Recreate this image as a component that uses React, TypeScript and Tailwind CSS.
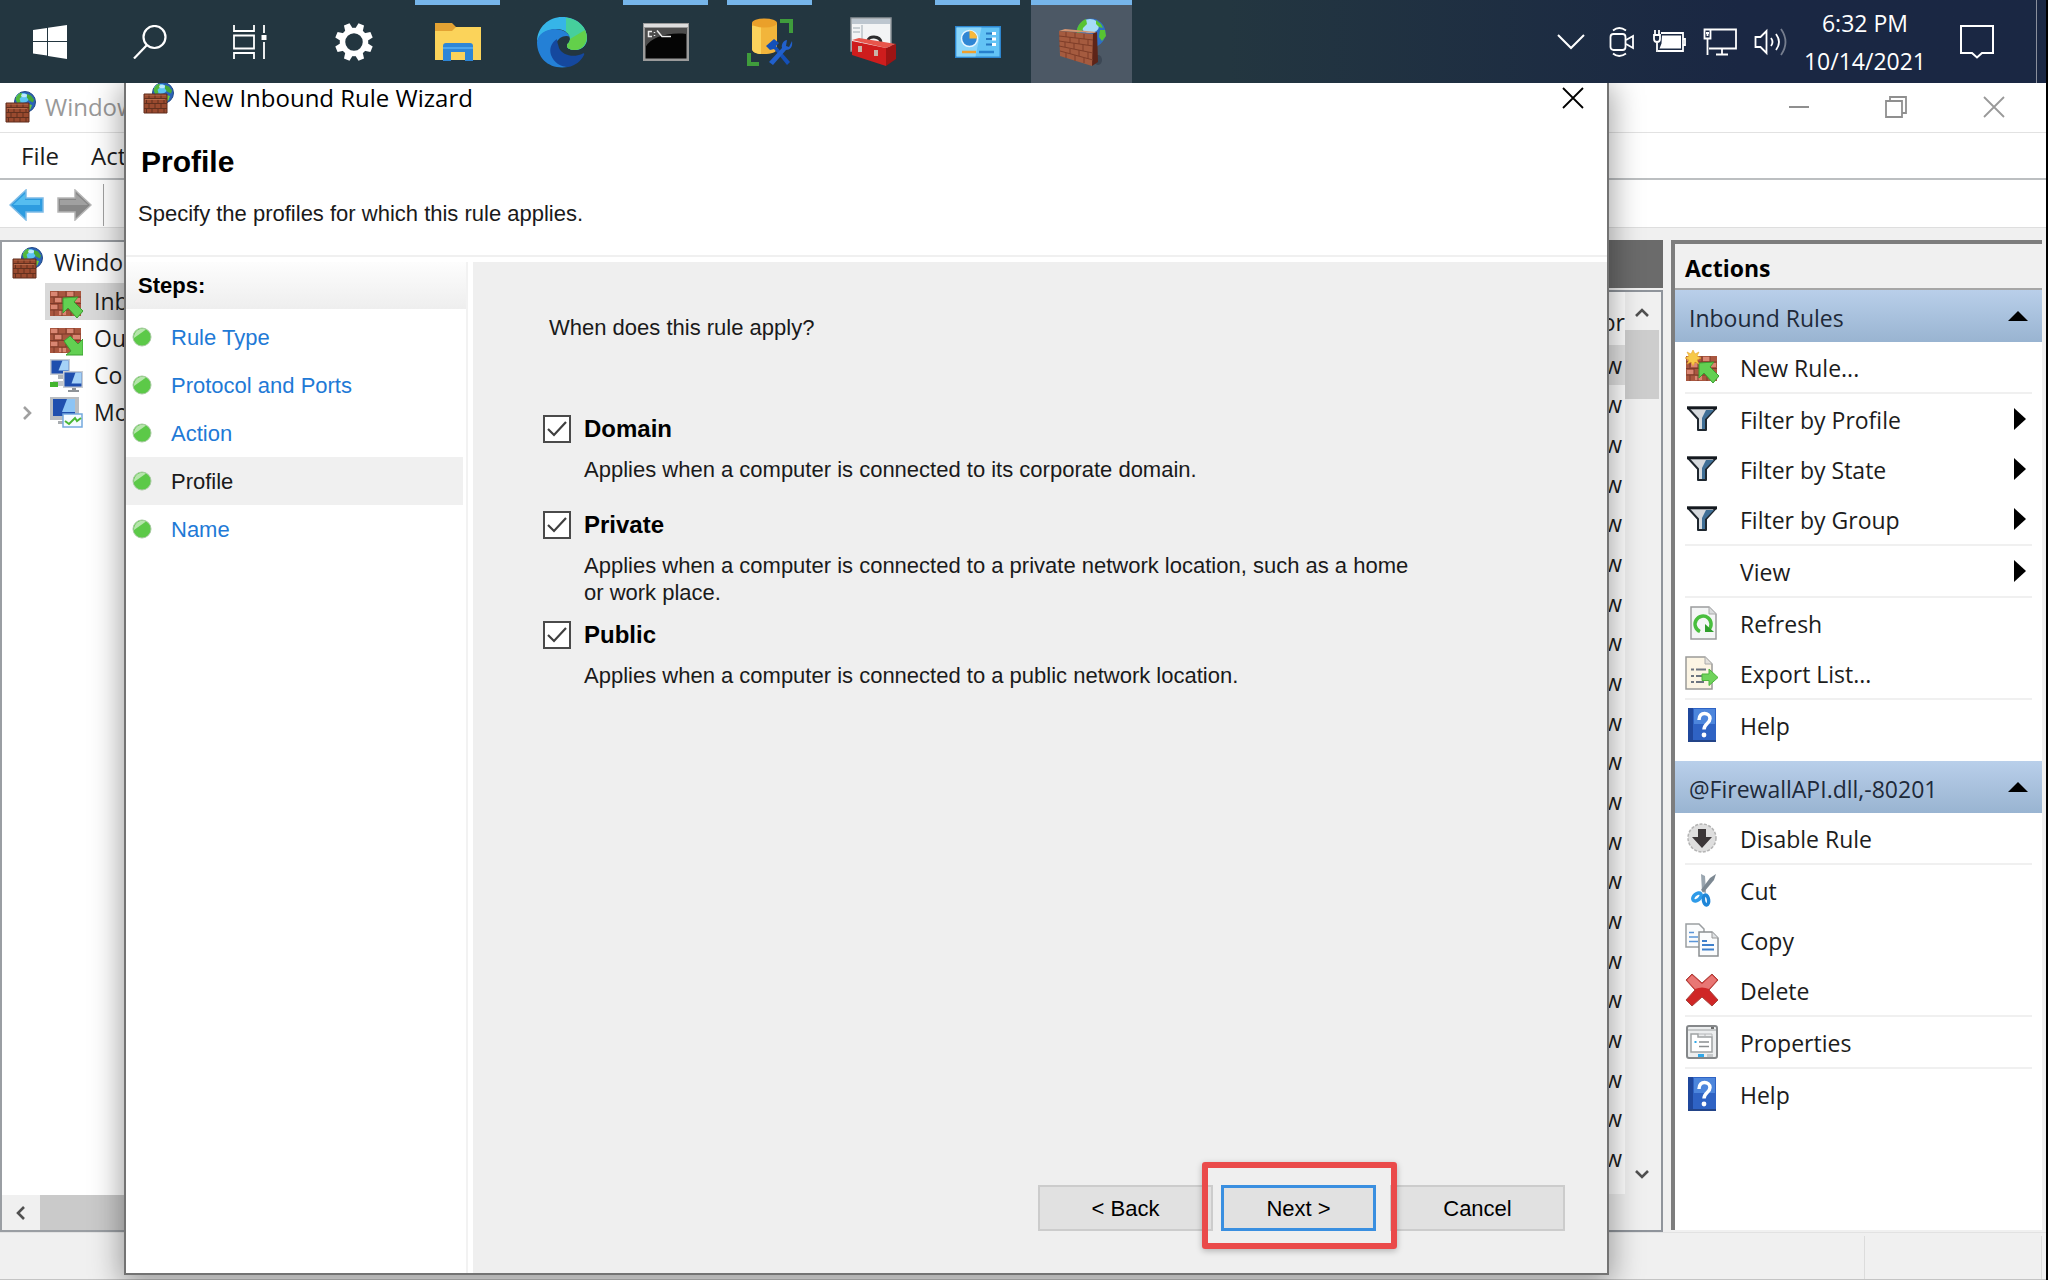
import type { ReactNode } from "react";

const segoe = "font-['Open_Sans','Noto_Sans',sans-serif]";
const dialogFont = "font-['Liberation_Sans',Arial,sans-serif]";

function Globe() {
  return (
    <>
      <circle cx="20" cy="11" r="10.500" fill="#2b63b8" stroke="#234a86" strokeWidth="1" />
      <ellipse cx="17.500" cy="7" rx="6.500" ry="5" fill="#5cc4f2" />
      <path d="M10.500 8c1-4 4-6 6-6.300l1 3-3 3 1 3-3 2z" fill="#52b83c" />
      <path d="M22 3l4 1.500 3 4-1 3-4-2-2-3z" fill="#46a838" />
      <path d="M23 13l4 1-1.500 4-3 2z" fill="#6fcf3f" />
      <ellipse cx="19" cy="4.500" rx="3" ry="1.800" fill="#d5f1ff" opacity=".8" />
    </>
  );
}

function FirewallIcon({ className = "size-8" }: { className?: string }) {
  return (
    <svg viewBox="0 0 32 32" className={className} aria-hidden="true">
      <Globe />
      <path d="M1 12h23v19H1z" fill="#9a4a2f" />
      <path
        d="M1 16.500h23M1 21.500h23M1 26.500h23M6 12v4.500M12 12v4.500M18 12v4.500M3.500 16.500v5M9 16.500v5M15 16.500v5M21 16.500v5M6 21.500v5M12 21.500v5M18 21.500v5M3.500 26.500V31M9 26.500V31M15 26.500V31M21 26.500V31"
        stroke="#63301f"
        fill="none"
      />
      <path d="M2 13h21M2 17.500h20" stroke="#c27352" strokeWidth=".8" />
      <path d="M1 12h23v19H1z" fill="none" stroke="#612c1c" />
    </svg>
  );
}

function FirewallLarge() {
  return (
    <svg viewBox="0 0 50 50" className="size-[50px]" aria-hidden="true">
      <ellipse cx="41" cy="43" rx="4" ry="5" fill="#2c3543" opacity=".5" />
      <circle cx="34" cy="16" r="14.500" fill="#2f6fc4" />
      <ellipse cx="33" cy="9" rx="9" ry="7" fill="#a6dcf7" />
      <path d="M20 12c2-6 6-9 9-10l1 5-4 4-1 4-5 1z" fill="#58c332" />
      <path d="M39 3l5 4 2 4-4-1-3-3zM43 13h5l1 6-4 5-3-4z" fill="#58c332" />
      <path d="M2 14l6-2 32 3-3 1z" fill="#d39472" />
      <path d="M35 17l5-2 1 30-6 4z" fill="#5d2418" />
      <path d="M2 14l34 3-1 32L3 39z" fill="#a55b3f" />
      <path
        d="M2 19l34 4M2 24l34 5M2 29l34 7M3 34l33 9M9 15v5M18 16v5M27 17v5M13 20v6M22 22v5M31 23v5M8 25v5M17 26v6M26 28v6M13 32v5M22 33v6M31 35v7M9 36v5M18 38v6M27 41v5"
        stroke="#7e3d28"
        strokeWidth="1"
        fill="none"
      />
    </svg>
  );
}

function BrickArrow({ dir, star }: { dir: "in" | "out"; star?: boolean }) {
  return (
    <svg viewBox="0 0 34 34" className="size-[34px] shrink-0" aria-hidden="true">
      <path d="M1 6h31v25H1z" fill="#a9563f" />
      <path d="M2 7h7v4H2zM18 7h7v4h-7zM6 13h7v4H6zM2 20h7v4H2zM10 26h7v4h-7zM24 13h7v4h-7z" fill="#d98672" />
      <path
        d="M1 12h31M1 18.500h31M1 25h31M9 6v6M17 6v6M25 6v6M5 12v6.500M13 12v6.500M22 12v6.500M9 18.500V25M17 18.500V25M5 25v6M13 25v6M22 25v6"
        stroke="#7d3a2b"
        strokeWidth="1"
        fill="none"
      />
      {dir === "in" ? (
        <path d="M14 13l15-1-4 5 9 9-6 7-9-10-5 5z" fill="#62d052" stroke="#3b9e31" />
      ) : (
        <path d="M15 19l6-5 8 8 5-5v16H17l5-4z" fill="#62d052" stroke="#3b9e31" />
      )}
      {star && (
        <path d="M8 0l2 4 4-2-2 4 4 2-4 2 2 4-4-2-2 4-2-4-4 2 2-4-4-2 4-2-2-4 4 2z" fill="#f7c948" stroke="#e5a52c" strokeWidth=".6" />
      )}
    </svg>
  );
}

function Monitor({ x, y, w, h }: { x: number; y: number; w: number; h: number }) {
  return (
    <g>
      <rect x={x} y={y} width={w} height={h} fill="#c9cdd2" />
      <rect x={x + 1.5} y={y + 1.5} width={w - 3} height={h - 3} fill="#1f4fae" />
      <path d={`M${x + w - 1.5} ${y + 1.5}v${h - 6}h-${w / 2}l4-${h - 6}z`} fill="#a5d2f7" />
    </g>
  );
}

function ConnectionIcon() {
  return (
    <svg viewBox="0 0 34 34" className="size-[34px] shrink-0" aria-hidden="true">
      <Monitor x={1} y={0} w={20} h={16} />
      <path d="M9 16h5v4H9z" fill="#aeb3b8" />
      <path d="M4 22h12v5H4z" fill="#c3c7cb" />
      <rect x="1" y="23" width="8" height="5" fill="#42b52e" />
      <Monitor x={14} y={12} w={20} h={17} />
      <path d="M19 31h11v2H19zM23 29h4v2h-4z" fill="#8e9398" />
    </svg>
  );
}

function MonitoringIcon() {
  return (
    <svg viewBox="0 0 34 34" className="size-[34px] shrink-0" aria-hidden="true">
      <rect x="1" y="1" width="29" height="23" fill="#b9bdc1" />
      <rect x="4" y="3" width="22" height="17" fill="#1f4fae" />
      <path d="M26 3v13H13l5-13z" fill="#8cc4f5" />
      <path d="M9 25h8v3H9z" fill="#a9adb1" />
      <rect x="14" y="18" width="19" height="13" fill="#f5fbff" stroke="#74a9de" strokeWidth="1.500" />
      <path d="M16 25l4 3 6-6 2 3 4-3" stroke="#49b735" strokeWidth="2" fill="none" />
    </svg>
  );
}

function FunnelIcon() {
  return (
    <svg viewBox="0 0 32 26" className="h-[26px] w-8" aria-hidden="true">
      <path d="M2 2h28L20 13v11h-8V13z" fill="#d6dade" stroke="#1e262e" strokeWidth="2" strokeLinejoin="round" />
      <path d="M20 4h8l-9 9v10h-3V12z" fill="#3f6f96" />
      <path d="M1 1.800h30" stroke="#14191f" strokeWidth="3" />
    </svg>
  );
}

function RefreshIcon() {
  return (
    <svg viewBox="0 0 32 34" className="h-[34px] w-8" aria-hidden="true">
      <path d="M5 1h18l7 7v25H5z" fill="#f4f6f6" stroke="#9a9c9d" strokeWidth="1.500" />
      <path d="M23 1v7h7" fill="#d9dbdc" stroke="#aaa" />
      <path d="M14 25.500a8 8 0 1 1 8.500-1.500" stroke="#49bf3e" strokeWidth="3.500" fill="none" />
      <path d="M19 18v8h9z" fill="#2f9e2b" />
    </svg>
  );
}

function ExportIcon() {
  return (
    <svg viewBox="0 0 34 34" className="size-[34px]" aria-hidden="true">
      <path d="M1 1h19l7 7v25H1z" fill="#fcf5e4" stroke="#9a9a98" strokeWidth="1.500" />
      <path d="M20 1v7h7" fill="#e3e1dc" stroke="#aaa" />
      <path d="M6 13.500h3M6 20h3M6 26h3M11 13.500h10M11 20h8M11 26h8" stroke="#6d7580" strokeWidth="1.800" />
      <path d="M17 18h7v-5l9 8.500-9 8v-5h-7z" fill="#6fd35b" stroke="#4db53c" />
    </svg>
  );
}

function HelpIcon() {
  return (
    <svg viewBox="0 0 32 34" className="h-[34px] w-8" aria-hidden="true">
      <rect x="2" y="0" width="28" height="34" fill="#2f63c4" />
      <rect x="2" y="0" width="5" height="34" fill="#1f479c" />
      <path d="M8 1h21v15H8z" fill="#4d86dc" />
      <path d="M13 12c0-9 11-8 11-1.500 0 5-6 5-6 11" stroke="#fff" strokeWidth="3.500" fill="none" />
      <circle cx="18" cy="27" r="2.400" fill="#fff" />
      <path d="M2 33h28" stroke="#234488" strokeWidth="2" />
    </svg>
  );
}

function DisableIcon() {
  return (
    <svg viewBox="0 0 32 32" className="size-8" aria-hidden="true">
      <circle cx="16" cy="16" r="14" fill="#dedede" stroke="#b4b4b4" strokeWidth="1.500" strokeDasharray="3 1.500" />
      <path d="M12 7h8v8h6L16 26 6 15h6z" fill="#3b3638" />
    </svg>
  );
}

function CutIcon() {
  return (
    <svg viewBox="0 0 32 34" className="h-[34px] w-8" aria-hidden="true">
      <path d="M15 1l4 2 1 17-4-1z" fill="#9aa6b0" />
      <path d="M30 1l-2 6-10 12-3-2 9-12z" fill="#7c8892" />
      <ellipse cx="11" cy="24" rx="3" ry="5" transform="rotate(50 11 24)" fill="none" stroke="#2f9be8" strokeWidth="3.500" />
      <ellipse cx="20" cy="27" rx="2.600" ry="5" transform="rotate(-8 20 27)" fill="none" stroke="#1f86d8" strokeWidth="3.500" />
    </svg>
  );
}

function CopyIcon() {
  return (
    <svg viewBox="0 0 34 34" className="size-[34px]" aria-hidden="true">
      <path d="M1 1h13l5 5v18H1z" fill="#fbfcfd" stroke="#9b9ea1" strokeWidth="1.500" />
      <path d="M4 9.500h5M4 14h9M4 18.500h9" stroke="#5b95d8" strokeWidth="1.500" />
      <path d="M14 9h13l6 6v18H14z" fill="#fbfcfd" stroke="#8b8e91" strokeWidth="1.500" />
      <path d="M27 9v6h6" fill="#dfe2e4" stroke="#999" />
      <path d="M17 18h5M17 22h12M17 26.500h12" stroke="#3f80cc" strokeWidth="1.800" />
    </svg>
  );
}

function DeleteIcon() {
  return (
    <svg viewBox="0 0 34 34" className="size-[34px]" aria-hidden="true">
      <path
        d="M7 1l10 9 10-9 6 6-9 10 9 10-6 6-10-9-10 9-6-6 9-10L1 7z"
        fill="#cf2626"
        stroke="#a8433c"
        strokeLinejoin="round"
      />
      <path d="M7 2l10 9 10-9 5 5-8 9q-7-3-14 0L2 7z" fill="#e87774" />
    </svg>
  );
}

function PropertiesIcon() {
  return (
    <svg viewBox="0 0 32 34" className="h-[34px] w-8" aria-hidden="true">
      <rect x="1" y="1" width="30" height="32" rx="2" fill="#eceeef" stroke="#85888a" strokeWidth="2" />
      <path d="M2 5h28" stroke="#b8bbbd" strokeWidth="1.500" />
      <path d="M25 3h3" stroke="#444" strokeWidth="1.500" />
      <path d="M5 9h7v3h14v15H5z" fill="#fff" stroke="#9fa2a4" strokeWidth="1.500" />
      <path d="M12 9h7v3M19 9h7v3" stroke="#b4b6b8" fill="none" />
      <path d="M13 17h10M13 21.500h10" stroke="#8b8e90" strokeWidth="1.500" />
      <path d="M8.500 16h2v2h-2zM12 29h6v3h-6z" fill="#2fa8ea" />
      <path d="M21 29h6v3h-6z" fill="#c5c8ca" />
    </svg>
  );
}

function NavArrow({ back }: { back?: boolean }) {
  return (
    <svg viewBox="0 0 36 32" className="h-8 w-9" aria-hidden="true">
      {back ? (
        <>
          <path d="M1 16L17 1v8h17v14H17v8z" fill="#2d9ce0" stroke="#7dbbe6" strokeWidth="1.500" />
          <path d="M4 16L16 5v6h15v5z" fill="#55bdf0" />
        </>
      ) : (
        <>
          <path d="M35 16L19 1v8H2v14h17v8z" fill="#878787" stroke="#b5b5b5" strokeWidth="1.500" />
          <path d="M32 16L20 5v6H4v5z" fill="#a0a0a0" />
        </>
      )}
    </svg>
  );
}

function CloseGlyph() {
  return (
    <svg viewBox="0 0 22 22" className="size-[22px]" aria-hidden="true">
      <path d="M1 1l20 20M21 1L1 21" stroke="currentColor" strokeWidth="1.800" />
    </svg>
  );
}

function Chevron({ d }: { d: string }) {
  return (
    <svg viewBox="0 0 14 14" className="size-[14px]" aria-hidden="true">
      <path d={d} stroke="currentColor" strokeWidth="2.600" fill="none" />
    </svg>
  );
}

const startIcons = [
  {
    name: "Start",
    icon: (
      <svg viewBox="0 0 34 34" className="size-[34px]">
        <path d="M0 5l14-2v13H0zM15 2.800L34 0v16H15zM0 17h14v13.500L0 28.500zM15 17h19v17l-19-3z" fill="#fff" />
      </svg>
    ),
  },
  {
    name: "Search",
    icon: (
      <svg viewBox="0 0 34 34" className="size-[34px]" fill="none" stroke="#fff" strokeWidth="2.200">
        <circle cx="21.500" cy="12" r="11" />
        <path d="M14 20L1 33.500" />
      </svg>
    ),
  },
  {
    name: "Task View",
    icon: (
      <svg viewBox="0 0 34 34" className="size-[34px]" fill="none" stroke="#fff" strokeWidth="1.800">
        <path d="M1 0v6h20V0M1 34v-6h20v6M1 10.500h20v13H1zM31 0v8M31 17v17" />
        <path d="M28.500 10h5v5h-5z" fill="#fff" stroke="none" />
      </svg>
    ),
  },
];

const apps: { name: string; state?: "running" | "active"; icon: ReactNode }[] = [
  {
    name: "Settings",
    icon: (
      <svg viewBox="0 0 38 38" className="size-[38px]">
        <circle cx="19" cy="19" r="11.500" fill="none" stroke="#fff" strokeWidth="5.500" />
        <g fill="#fff">
          {[22.5, 67.5, 112.5, 157.5, 202.5, 247.5, 292.5, 337.5].map((deg) => (
            <path key={deg} d="M15 6l1-6h6l1 6z" transform={`rotate(${deg} 19 19)`} />
          ))}
        </g>
      </svg>
    ),
  },
  {
    name: "File Explorer",
    state: "running",
    icon: (
      <svg viewBox="0 0 48 42" className="h-[42px] w-12">
        <path d="M1 2h17l4 4h24v7H1z" fill="#e3a233" />
        <path d="M1 10h17l4-4h25v33H1z" fill="#fbd35a" />
        <path d="M9 40V25q0-3 3-3h24q3 0 3 3v15h-8v-9H17v9z" fill="#2e86d6" />
        <path d="M9 27h30" stroke="#4ea6ec" strokeWidth="2" />
      </svg>
    ),
  },
  {
    name: "Microsoft Edge",
    icon: (
      <svg viewBox="0 0 52 52" className="size-[52px]">
        <path d="M1 26C1 11 13 1 26 1c15 0 25 10 25 21 0 8-6 12-12 12-5 0-8-2-8-4 0-3 3-3 3-7 0-6-7-10-13-10C12 13 3 18 1 26z" fill="#36b5e8" />
        <path d="M30 1.400C43 3 51 12 51 22c0 8-6 12-12 12-5 0-8-2-8-4 0-3 3-3 3-7 0-3-2-6-4-7z" fill="#46cf9c" />
        <path d="M49 14c5 11-2 20-10 20-5 0-8-2-8-4 0-3 3-3 3-7z" fill="#63d04a" />
        <path d="M1 26c1-8 9-13 18-13 8 0 13 4 15 8-3-2-7-1-10 1-5 4-6 10-4 16 2 7 7 12 12 13C14 54 1 43 1 26z" fill="#2480d6" />
        <path d="M21 23c-6 4-8 10-6 16 3 8 10 12 17 12 7-1 13-6 16-12 1-2-1-2-2-1-9 4-20 1-23-6-1-4-2-6-2-9z" fill="#15489e" />
      </svg>
    ),
  },
  {
    name: "Command Prompt",
    state: "running",
    icon: (
      <svg viewBox="0 0 46 38" className="h-[38px] w-[46px]">
        <rect width="46" height="38" fill="#9b9b9b" />
        <path d="M1 1h44v3H1z" fill="#dedede" />
        <path d="M2.500 5h41v30.500h-41z" fill="#050505" />
        <path d="M2.500 5h41v6C25 9 8 14 2.500 24z" fill="#4c4c4c" />
        <path d="M9 8.500H5.500v5H9M11.500 9v1M11.500 12v1M14 7.500l5 6h9" stroke="#ececec" strokeWidth="1.500" fill="none" />
      </svg>
    ),
  },
  {
    name: "Data Tools",
    state: "running",
    icon: (
      <svg viewBox="0 0 48 48" className="size-12">
        <path d="M6 5v26c0 3 5 5 12 5s13-2 13-5V5z" fill="#f2b53b" />
        <path d="M6 8v23c0 3 5 5 9 5V8z" fill="#fbd35c" />
        <ellipse cx="18.500" cy="5" rx="12.500" ry="4.500" fill="#eaa02a" />
        <path d="M34 1h13v14h-4V5h-9zM1 35h4v9h8v4H1z" fill="#3f9c3c" />
        <path d="M20 28l8-7 5 4-3 3 14 16-3 3-13-16-4 1z" fill="#1450b8" />
        <path d="M46 23c1 6-2 9-6 9L27 47l-4-3 13-14c-1-4 2-8 5-8l-1 6 3 1z" fill="#2160cc" />
      </svg>
    ),
  },
  {
    name: "Toolbox",
    icon: (
      <svg viewBox="0 0 48 50" className="h-[50px] w-12">
        <path d="M1 1h40v33H1z" fill="#f3f4f5" stroke="#8c9298" strokeWidth="1.500" />
        <path d="M2 2h38v5H2z" fill="#bdc6cf" />
        <path d="M12 8v24M3 11h7M3 15h7" stroke="#bcc2c7" strokeWidth="1.500" />
        <path d="M18 24c0-6 12-5 13 1" fill="none" stroke="#2c2c2e" strokeWidth="3" />
        <path d="M2 23l7-2 37 6-10 4z" fill="#e8554b" />
        <path d="M2 24l34 7v18L2 38z" fill="#ce1d1d" />
        <path d="M36 31l10-4v15l-10 7z" fill="#9d1414" />
        <path d="M8 29h4v6H8zM24 33h4v6h-4z" fill="#c9b4a8" />
      </svg>
    ),
  },
  {
    name: "Control Panel",
    state: "running",
    icon: (
      <svg viewBox="0 0 46 32" className="h-8 w-[46px]">
        <rect width="46" height="32" fill="#2d86cf" />
        <path d="M1.500 1.500h43v29h-43z" fill="#63c3f5" />
        <path d="M1.500 1.500h25l-6 29h-19z" fill="#8bd6fa" />
        <circle cx="14.500" cy="12.500" r="8" fill="#2f86d4" stroke="#e6f6ff" strokeWidth="1.500" />
        <path d="M14.500 12.500V4.500a8 8 0 0 1 7.500 8z" fill="#f8b93c" />
        <path d="M31 7.500h6M31 13h6M31 18.500h6" stroke="#2779c2" strokeWidth="2.200" />
        <path d="M37 7.500h4M37 13h4M37 18.500h4" stroke="#fff" strokeWidth="3" />
        <path d="M7 26h14" stroke="#f0a02c" strokeWidth="2.500" />
        <path d="M24 26h15" stroke="#2680cc" strokeWidth="2.500" />
      </svg>
    ),
  },
  { name: "Windows Defender Firewall", state: "active", icon: <FirewallLarge /> },
];

const trayIcons = [
  {
    name: "Meet now",
    icon: (
      <svg viewBox="0 0 26 32" className="h-8 w-[26px]" fill="none" stroke="#fff" strokeWidth="1.800">
        <rect x="1.500" y="8" width="15" height="16" rx="3" />
        <path d="M17 14l7-4v12l-7-4M4 4.500q6-5 13 0M4 27.500q6 5 13 0" />
      </svg>
    ),
  },
  {
    name: "Battery",
    icon: (
      <svg viewBox="0 0 34 24" className="h-6 w-[34px]" fill="none" stroke="#fff" strokeWidth="1.800">
        <path d="M9 3h22v18H6M31 9h2v6h-2" />
        <path d="M10 5.500h19v13H7.500l2-5z" fill="#fff" stroke="none" />
        <path d="M2 5h6v4q0 3-3 3t-3-3zM3 0v5M7 0v5M5 12v10" />
      </svg>
    ),
  },
  {
    name: "Network",
    icon: (
      <svg viewBox="0 0 34 28" className="h-7 w-[34px]" fill="none" stroke="#fff" strokeWidth="1.800">
        <path d="M8 1.500h25v19H6M19 21v5M13 26.500h12M1.500 1.500h6v9h-6zM4.500 10v17M3 5h3M4.500 5v3" />
      </svg>
    ),
  },
  {
    name: "Volume",
    icon: (
      <svg viewBox="0 0 36 30" className="h-[30px] w-9" fill="none" stroke="#fff" strokeWidth="1.800">
        <path d="M1.500 10h5l6-6v22l-6-6h-5zM17 11q3 4 0 8M22 7q6 8 0 16" />
        <path d="M27 2q9 13 0 26" opacity=".4" />
      </svg>
    ),
  },
];

function Taskbar() {
  return (
    <header
      className={`relative z-20 flex h-[83px] shrink-0 items-stretch bg-linear-to-r from-[#233640] from-60% to-[#1a2743] to-85% text-white ${segoe}`}
    >
      {startIcons.map((item) => (
        <button key={item.name} aria-label={item.name} className="flex w-[100px] items-center justify-center">
          {item.icon}
        </button>
      ))}
      <nav className="ml-[3px] flex gap-[3px]">
        {apps.map((app) => (
          <button
            key={app.name}
            aria-label={app.name}
            className={`relative flex w-[101px] items-center justify-center ${app.state === "active" ? "bg-[#4c5865]" : ""}`}
          >
            {app.state && (
              <span
                className={`absolute top-0 h-[5px] bg-[#76b5ea] ${app.state === "active" ? "inset-x-0" : "inset-x-2"}`}
              />
            )}
            {app.icon}
          </button>
        ))}
      </nav>
      <div className="ml-auto flex items-center">
        <button aria-label="Show hidden icons" className="mr-[24px]">
          <svg viewBox="0 0 28 16" className="h-4 w-7" fill="none" stroke="#fff" strokeWidth="2">
            <path d="M1 1l13 13L27 1" />
          </svg>
        </button>
        <div className="flex items-center gap-[17px]">
          {trayIcons.map((item) => (
            <button key={item.name} aria-label={item.name}>
              {item.icon}
            </button>
          ))}
        </div>
        <button className="ml-[14px] text-center text-[23px] leading-[38px]">
          <span className="block">6:32 PM</span>
          <span className="block">10/14/2021</span>
        </button>
        <button aria-label="Notifications" className="ml-[34px]">
          <svg viewBox="0 0 34 34" className="size-[34px]" fill="none" stroke="#fff" strokeWidth="2">
            <path d="M1 1h32v27H22l-5 4.500-5-4.500H1z" />
          </svg>
        </button>
        <span className="ml-[42px] h-[83px] w-px bg-[#8a8f9c]" />
        <span className="w-[9px]" />
      </div>
    </header>
  );
}

const treeItems = [
  { label: "Inb", icon: <BrickArrow dir="in" />, selected: true },
  { label: "Ou", icon: <BrickArrow dir="out" /> },
  { label: "Co", icon: <ConnectionIcon /> },
  { label: "Mo", icon: <MonitoringIcon />, expandable: true },
];

function TreePane() {
  return (
    <aside className="flex w-[300px] shrink-0 flex-col border-2 border-[#9a9ea3] bg-white">
      <div className="flex h-[41px] items-center gap-[10px] pl-[10px] text-[23px]">
        <FirewallIcon />
        Windo
      </div>
      <ul className="text-[23px]">
        {treeItems.map((item) => (
          <li key={item.label} className="flex h-[37px] items-center">
            <span className="flex w-[43px] justify-center pl-[6px] text-[#a0a0a0]">
              {item.expandable && <Chevron d="M4 1l6 6-6 6" />}
            </span>
            <span
              className={`flex h-full flex-1 items-center gap-[11px] pl-[4px] ${item.selected ? "bg-[#d9d9d9]" : ""}`}
            >
              {item.icon}
              {item.label}
            </span>
          </li>
        ))}
      </ul>
      <div className="mt-auto flex h-[35px] bg-[#f0f0f0]">
        <button aria-label="Scroll left" className="flex w-[38px] items-center justify-center text-[#505050]">
          <Chevron d="M10 1L4 7l6 6" />
        </button>
        <div className="w-[180px] bg-[#cacaca]" />
      </div>
    </aside>
  );
}

function RulesPane() {
  return (
    <section className="flex min-w-0 flex-1 flex-col">
      <div className="h-[48px] bg-[#6b6b6b]" />
      <div className="mt-[2px] flex min-h-0 flex-1 flex-col border-2 border-[#8f949b] bg-white">
        <div className="flex min-h-0 flex-1">
          <div className="flex flex-1 flex-col pb-[16px]">
            <table className="w-full flex-1 text-right text-[23px] leading-7">
              <thead>
                <tr>
                  <th className="h-[53px] pt-[6px] font-normal">or</th>
                </tr>
              </thead>
              <tbody>
                {Array.from({ length: 21 }).map((_, index) => (
                  <tr key={index} className={index === 0 ? "bg-[#e3e3e3]" : ""}>
                    <td className="pr-[3px]">w</td>
                  </tr>
                ))}
              </tbody>
            </table>
          </div>
          <div className="flex w-[36px] flex-col items-center bg-[#f0f0f0] pr-[2px]">
            <button aria-label="Scroll up" className="flex h-[38px] items-center pt-[4px] text-[#505050]">
              <Chevron d="M1 10l6-6 6 6" />
            </button>
            <div className="h-[69px] w-[34px] bg-[#cdcdcd]" />
            <button aria-label="Scroll down" className="mt-auto flex h-[40px] items-center text-[#505050]">
              <Chevron d="M1 4l6 6 6-6" />
            </button>
          </div>
        </div>
        <div className="h-[36px] bg-[#f0f0f0]" />
      </div>
    </section>
  );
}

type ActionItem = { label: string; icon?: ReactNode; submenu?: boolean; divider?: boolean };

const ruleActions: ActionItem[] = [
  { label: "New Rule...", icon: <BrickArrow dir="in" star />, divider: true },
  { label: "Filter by Profile", icon: <FunnelIcon />, submenu: true },
  { label: "Filter by State", icon: <FunnelIcon />, submenu: true },
  { label: "Filter by Group", icon: <FunnelIcon />, submenu: true, divider: true },
  { label: "View", submenu: true, divider: true },
  { label: "Refresh", icon: <RefreshIcon /> },
  { label: "Export List...", icon: <ExportIcon />, divider: true },
  { label: "Help", icon: <HelpIcon /> },
];

const itemActions: ActionItem[] = [
  { label: "Disable Rule", icon: <DisableIcon />, divider: true },
  { label: "Cut", icon: <CutIcon /> },
  { label: "Copy", icon: <CopyIcon /> },
  { label: "Delete", icon: <DeleteIcon />, divider: true },
  { label: "Properties", icon: <PropertiesIcon />, divider: true },
  { label: "Help", icon: <HelpIcon /> },
];

function ActionGroup({ title, items }: { title: string; items: ActionItem[] }) {
  return (
    <section>
      <button className="flex h-[52px] w-full items-center justify-between bg-linear-to-b from-[#b9cfea] to-[#99b4d1] pr-[14px] pl-[14px] text-[23px] text-[#1e2a3a]">
        <span className="pt-[4px]">{title}</span>
        <svg viewBox="0 0 20 10" className="h-[10px] w-5" aria-hidden="true">
          <path d="M10 0l10 10H0z" fill="#000" />
        </svg>
      </button>
      <ul className="pr-[10px] pl-[10px] text-[23px] text-[#1c1c1c]">
        {items.map((item) => (
          <li key={item.label} className={item.divider ? "border-b-2 border-[#f0f0f0]" : ""}>
            <button className="flex h-[50px] w-full items-center">
              <span className="flex w-[34px] justify-center">{item.icon}</span>
              <span className="ml-[21px] pt-[3px]">{item.label}</span>
              {item.submenu && (
                <svg viewBox="0 0 12 22" className="mr-[6px] ml-auto h-[22px] w-3" aria-hidden="true">
                  <path d="M0 0l12 11L0 22z" fill="#000" />
                </svg>
              )}
            </button>
          </li>
        ))}
      </ul>
    </section>
  );
}

function ActionsPane() {
  return (
    <aside className="mb-[2px] ml-[8px] flex w-[371px] shrink-0 flex-col border-t-4 border-l-4 border-[#7d7d7d] bg-white">
      <h2 className="flex h-[46px] items-center border-b-2 border-[#a6a6a6] bg-[#f0f0f0] pt-[4px] pl-[10px] text-[23px] font-bold text-black">
        Actions
      </h2>
      <div className="flex flex-col gap-[11px]">
        <ActionGroup title="Inbound Rules" items={ruleActions} />
        <ActionGroup title="@FirewallAPI.dll,-80201" items={itemActions} />
      </div>
    </aside>
  );
}

function FirewallWindow() {
  return (
    <main className={`flex h-full flex-col bg-[#f0f0f0] text-[#1c1c1c] ${segoe}`}>
      <div className="flex h-[50px] shrink-0 items-center border-b border-[#e2e2e2] bg-white pb-[2px] pl-[5px] text-[#999]">
        <FirewallIcon />
        <span className="ml-[8px] text-[24px]">Window</span>
        <div className="mr-[41px] ml-auto flex items-center gap-[76px]">
          <button aria-label="Minimize">
            <svg viewBox="0 0 20 20" className="size-5">
              <path d="M0 10h20" stroke="#8f8f8f" strokeWidth="2" />
            </svg>
          </button>
          <button aria-label="Restore">
            <svg viewBox="0 0 22 22" className="size-[22px]" fill="none" stroke="#8f8f8f" strokeWidth="1.800">
              <path d="M1 5h16v16H1zM5 5V1h16v16h-4" />
            </svg>
          </button>
          <button aria-label="Close">
            <CloseGlyph />
          </button>
        </div>
      </div>
      <nav className="flex h-[47px] shrink-0 items-center gap-[32px] border-b-2 border-[#bcbfc1] bg-white pl-[21px] text-[24px]">
        <button>File</button>
        <button>Act</button>
      </nav>
      <div className="flex h-[48px] shrink-0 items-center gap-[11px] border-b border-[#dedede] bg-white pt-[2px] pl-[9px]">
        <button aria-label="Back">
          <NavArrow back />
        </button>
        <button aria-label="Forward">
          <NavArrow />
        </button>
        <span className="h-[42px] w-px bg-[#a0a0a0]" />
      </div>
      <div className="flex min-h-0 flex-1 pt-[12px] pr-[4px]">
        <TreePane />
        <span className="w-[8px] shrink-0" />
        <RulesPane />
        <ActionsPane />
      </div>
      <footer className="flex h-[48px] shrink-0 justify-end border-t border-b border-[#e2e2e2] border-b-[#c4c4c4] pt-[3px] pr-[4px]">
        <span className="w-[178px] border-x border-[#dcdcdc]" />
      </footer>
    </main>
  );
}

const steps = ["Rule Type", "Protocol and Ports", "Action", "Profile", "Name"];

const profiles = [
  {
    id: "domain",
    label: "Domain",
    text: "Applies when a computer is connected to its corporate domain.",
  },
  {
    id: "private",
    label: "Private",
    text: "Applies when a computer is connected to a private network location, such as a home or work place.",
  },
  {
    id: "public",
    label: "Public",
    text: "Applies when a computer is connected to a public network location.",
  },
];

function StepBullet() {
  return (
    <svg viewBox="0 0 20 20" className="size-5" aria-hidden="true">
      <circle cx="10" cy="10" r="9" fill="#5cc948" stroke="#a6c9a0" />
      <path d="M2 11a8.500 8.500 0 0 1 12-8.500z" fill="#b6e5ac" />
    </svg>
  );
}

function WizardDialog() {
  return (
    <div
      role="dialog"
      aria-labelledby="wizard-title"
      className={`absolute top-0 right-[437px] bottom-[5px] left-[124px] z-10 flex flex-col border-x-2 border-b-2 border-[#737373] bg-white text-[22px] leading-[27px] text-[#1a1a1a] shadow-[0_6px_28px_4px_rgba(0,0,0,0.35)] ${dialogFont}`}
    >
      <div className="-mt-[3px] flex h-[35px] shrink-0 items-center pr-[23px] pl-[17px]">
        <FirewallIcon />
        <h1 id="wizard-title" className={`ml-[8px] text-[24px] text-black ${segoe}`}>
          New Inbound Rule Wizard
        </h1>
        <button aria-label="Close" className="ml-auto text-black">
          <CloseGlyph />
        </button>
      </div>
      <div className="h-[142px] shrink-0 border-b-2 border-[#f0f0f0] pt-[29px]">
        <h2 className="pl-[15px] text-[30px] leading-[36px] font-bold text-black">Profile</h2>
        <p className="mt-[20px] pl-[12px]">Specify the profiles for which this rule applies.</p>
      </div>
      <div className="flex min-h-0 flex-1 pt-[5px]">
        <nav className="mr-[5px] w-[342px] shrink-0 border-r-2 border-[#f2f2f2]">
          <h3 className="flex h-[47px] items-center bg-linear-to-b from-[#fdfdfd] to-[#eeeeee] pl-[12px] font-bold text-black">
            Steps:
          </h3>
          <ul className="mt-[4px] pr-[3px]">
            {steps.map((step) => {
              const current = step === "Profile";
              return (
                <li
                  key={step}
                  className={`flex h-[48px] items-center gap-[19px] pl-[6px] ${current ? "bg-[#f0f0f0]" : ""}`}
                >
                  <StepBullet />
                  {current ? (
                    <span>{step}</span>
                  ) : (
                    <a href="#" className="text-[#1f7ad6]">
                      {step}
                    </a>
                  )}
                </li>
              );
            })}
          </ul>
        </nav>
        <div className="flex flex-1 flex-col bg-[#efefef] pt-[52px] pl-[70px]">
          <fieldset>
            <legend className="pl-[6px]">When does this rule apply?</legend>
            <div className="mt-[74px]">
              {profiles.map((profile) => (
                <div key={profile.id} className="min-h-[96px] pb-[15px]">
                  <div className="flex h-7 items-center gap-[13px]">
                    <span className="relative size-7">
                      <input
                        id={profile.id}
                        type="checkbox"
                        defaultChecked
                        className="peer size-7 appearance-none border-2 border-[#4a4a4a] bg-white"
                      />
                      <svg
                        viewBox="0 0 28 28"
                        className="pointer-events-none absolute inset-0 hidden size-7 peer-checked:block"
                        aria-hidden="true"
                      >
                        <path d="M5 14l6 6L23 7" stroke="#3f3f3f" strokeWidth="2.200" fill="none" />
                      </svg>
                    </span>
                    <label htmlFor={profile.id} className="text-2xl font-bold text-black">
                      {profile.label}
                    </label>
                  </div>
                  <p className="mt-[13px] ml-[41px] max-w-[840px]">{profile.text}</p>
                </div>
              ))}
            </div>
          </fieldset>
          <div className="mt-auto flex h-[88px] pr-[42px]">
            <button className="ml-auto h-[46px] w-[175px] border-2 border-[#cccccc] bg-[#e1e1e1] text-black">
              &lt; Back
            </button>
            <div className="relative mr-[14px] ml-[8px] h-[46px]">
              <button className="h-full w-[155px] border-[3px] border-[#3a8fe0] bg-[#e1e1e1] text-black">
                Next &gt;
              </button>
              <span className="pointer-events-none absolute -top-[23px] -right-[21px] -bottom-[18px] -left-[19px] rounded-[3px] border-[6px] border-[#ea4a4a] shadow-[0_2px_6px_rgba(0,0,0,0.25)]" />
            </div>
            <button className="h-[46px] w-[175px] border-2 border-[#cccccc] bg-[#e1e1e1] text-black">Cancel</button>
          </div>
        </div>
      </div>
    </div>
  );
}

export default function App() {
  return (
    <div className="flex h-screen flex-col overflow-hidden border-r-2 border-black bg-[#f0f0f0]">
      <Taskbar />
      <div className="relative min-h-0 flex-1">
        <FirewallWindow />
        <WizardDialog />
      </div>
    </div>
  );
}
